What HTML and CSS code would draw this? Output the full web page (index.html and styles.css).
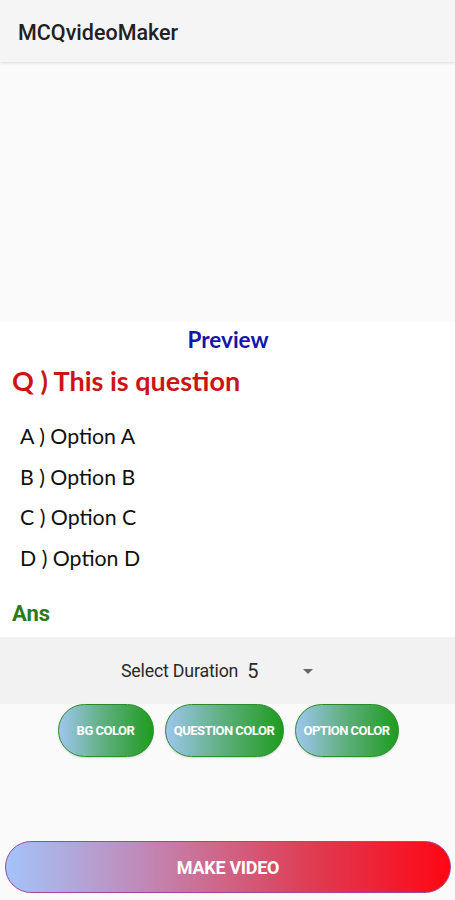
FILE: index.html
```html
<!DOCTYPE html>
<html>
<head>
<meta charset="utf-8">
<link rel="stylesheet" href="styles.css">
</head>
<body>
<div class="app">
  <header class="appbar"><span class="title">MCQvideoMaker</span></header>
  <div class="canvas"></div>
  <section class="preview">
    <div class="preview-label">Preview</div>
    <div class="question">Q ) This is question</div>
    <ul class="options">
      <li>A ) Option A</li>
      <li>B ) Option B</li>
      <li>C ) Option C</li>
      <li>D ) Option D</li>
    </ul>
    <div class="ans">Ans</div>
  </section>
  <div class="duration">
    <span class="dur-label">Select Duration</span>
    <span class="dur-value">5</span>
    <span class="dur-arrow"></span>
  </div>
  <div class="color-row">
    <button class="color-btn bg">BG COLOR</button>
    <button class="color-btn qc">QUESTION COLOR</button>
    <button class="color-btn oc">OPTION COLOR</button>
  </div>
  <div class="bottom">
    <button class="make">MAKE VIDEO</button>
  </div>
</div>
</body>
</html>
```
FILE: styles.css
```css
html, body {
  margin: 0;
  padding: 0;
  background: #fafafa;
}
.app {
  width: 455px;
  height: 900px;
  display: flex;
  flex-direction: column;
  font-family: Roboto, "Liberation Sans", sans-serif;
}
.appbar {
  height: 62px;
  background: #f5f5f5;
  box-shadow: 0 1px 3px rgba(0,0,0,0.12);
  display: flex;
  align-items: center;
  padding-left: 18px;
  position: relative;
  z-index: 1;
  flex-shrink: 0;
}
.title {
  font-size: 21.5px;
  color: #212121;
  font-weight: 500;
  margin-top: 2px;
}
.canvas {
  height: 260px;
  background: #fafafa;
  flex-shrink: 0;
}
.preview {
  height: 315px;
  background: #ffffff;
  flex-shrink: 0;
  font-family: Lato, "Open Sans", sans-serif;
  display: flex;
  flex-direction: column;
}
.preview-label {
  text-align: center;
  color: #1515a8;
  font-weight: 700;
  font-size: 22.5px;
  margin-top: 5px;
  line-height: 26px;
  padding-left: 1px;
}
.question {
  color: #cc1414;
  font-weight: 700;
  font-size: 27px;
  line-height: 30px;
  padding-left: 12px;
  margin-top: 13px;
}
.options {
  list-style: none;
  margin: 28px 0 0 0;
  padding: 0 0 0 20px;
  display: flex;
  flex-direction: column;
  gap: 16.5px;
}
.options li {
  font-size: 21.3px;
  line-height: 24px;
  color: #111;
}
.ans {
  font-family: Roboto, "Liberation Sans", sans-serif;
  color: #2d7a1c;
  font-weight: 700;
  font-size: 22px;
  line-height: 24px;
  padding-left: 12px;
  margin-top: 32px;
}
.duration {
  height: 67px;
  background: #f2f2f2;
  flex-shrink: 0;
  display: flex;
  align-items: center;
  padding-left: 121px;
  color: #2a2a2a;
}
.dur-label {
  font-size: 17.8px;
  letter-spacing: -0.2px;
}
.dur-value {
  font-size: 20px;
  margin-left: 9px;
}
.dur-arrow {
  width: 0;
  height: 0;
  border-left: 5px solid transparent;
  border-right: 5px solid transparent;
  border-top: 5px solid #666;
  margin-left: 45px;
  margin-top: 1px;
}
.color-row {
  display: flex;
  justify-content: center;
  gap: 11px;
  margin-top: 0;
  padding-left: 1px;
  flex-shrink: 0;
}
.color-btn {
  height: 53px;
  border-radius: 27px;
  border: 1.5px solid #2a8a2a;
  background: linear-gradient(90deg, #9ec6ee 0%, #5cae7a 50%, #1f9c1f 100%);
  color: #fff;
  font-family: Roboto, "Liberation Sans", sans-serif;
  font-weight: 700;
  font-size: 13px;
  letter-spacing: -0.5px;
  padding: 0;
  box-shadow: 0 1px 2px rgba(0,0,0,0.15);
}
.color-btn.bg { width: 96px; }
.color-btn.qc { width: 119px; }
.color-btn.oc { width: 104px; }
.bottom {
  margin-top: auto;
  padding: 0 4px 7px 5px;
  flex-shrink: 0;
}
.make {
  width: 100%;
  height: 52px;
  border-radius: 26px;
  border: 1.5px solid #a0479a;
  background: linear-gradient(90deg, #a3c4fa 0%, #c08ab8 30%, #e03a50 70%, #ff0614 100%);
  color: #fff;
  font-family: Roboto, "Liberation Sans", sans-serif;
  font-weight: 700;
  font-size: 18px;
  letter-spacing: -0.3px;
  padding: 0;
  display: block;
}
```
